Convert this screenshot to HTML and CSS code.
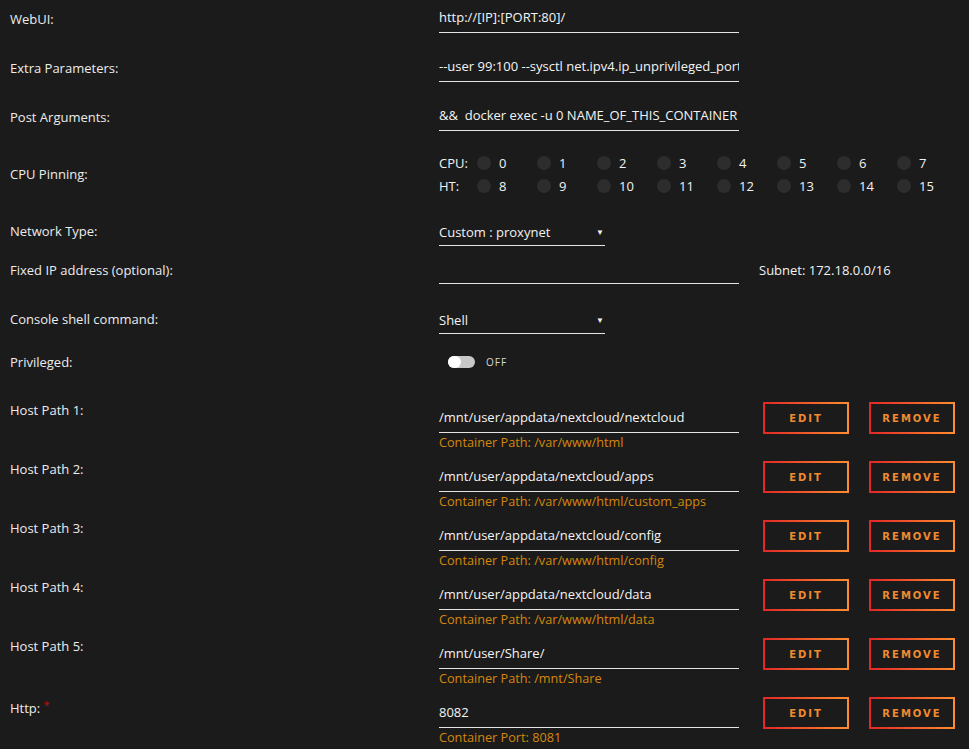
FILE: index.html
```html
<!DOCTYPE html>
<html lang="en">
<head>
  <meta charset="UTF-8" />
  <title>Update Container</title>
  <link rel="stylesheet" href="styles.css">
</head>
<body>
  <div class="form">
    <div class="row">
      <label class="lbl">WebUI:</label>
      <div class="val"><input class="textbox" type="text" value="http://[IP]:[PORT:80]/" /></div>
    </div>

    <div class="row">
      <label class="lbl">Extra Parameters:</label>
      <div class="val"><input class="textbox" type="text" value="--user 99:100 --sysctl net.ipv4.ip_unprivileged_port_start=0" /></div>
    </div>

    <div class="row">
      <label class="lbl">Post Arguments:</label>
      <div class="val"><input class="textbox" type="text" value="&amp;&amp;  docker exec -u 0 NAME_OF_THIS_CONTAINER /bin/sh -c 'echo'" /></div>
    </div>

    <div class="row row-cpu">
      <label class="lbl lbl-cpu">CPU Pinning:</label>
      <div class="val cpu-grid">
        <div class="cpu-line">
          <span class="cpu-name">CPU:</span>
          <span class="core"><i class="dot"></i>0</span>
          <span class="core"><i class="dot"></i>1</span>
          <span class="core"><i class="dot"></i>2</span>
          <span class="core"><i class="dot"></i>3</span>
          <span class="core"><i class="dot"></i>4</span>
          <span class="core"><i class="dot"></i>5</span>
          <span class="core"><i class="dot"></i>6</span>
          <span class="core"><i class="dot"></i>7</span>
        </div>
        <div class="cpu-line">
          <span class="cpu-name">HT:</span>
          <span class="core"><i class="dot"></i>8</span>
          <span class="core"><i class="dot"></i>9</span>
          <span class="core"><i class="dot"></i>10</span>
          <span class="core"><i class="dot"></i>11</span>
          <span class="core"><i class="dot"></i>12</span>
          <span class="core"><i class="dot"></i>13</span>
          <span class="core"><i class="dot"></i>14</span>
          <span class="core"><i class="dot"></i>15</span>
        </div>
      </div>
    </div>

    <div class="row row-net">
      <label class="lbl">Network Type:</label>
      <div class="val"><div class="select">Custom : proxynet<span class="arrow">&#9660;</span></div></div>
    </div>

    <div class="row">
      <label class="lbl">Fixed IP address (optional):</label>
      <div class="val val-inline">
        <input class="textbox" type="text" value="" />
        <span class="subnet">Subnet: 172.18.0.0/16</span>
      </div>
    </div>

    <div class="row row-console">
      <label class="lbl">Console shell command:</label>
      <div class="val"><div class="select">Shell<span class="arrow">&#9660;</span></div></div>
    </div>

    <div class="row row-priv">
      <label class="lbl">Privileged:</label>
      <div class="switch">
        <span class="track"><span class="knob"></span></span>
        <span class="switch-text">OFF</span>
      </div>
    </div>

    <div class="row row-path">
      <label class="lbl">Host Path 1:</label>
      <div class="val path">
        <div class="path-box">
          <input class="textbox" type="text" value="/mnt/user/appdata/nextcloud/nextcloud" />
          <div class="hint">Container Path: /var/www/html</div>
        </div>
        <button class="btn btn-edit">EDIT</button>
        <button class="btn btn-remove">REMOVE</button>
      </div>
    </div>

    <div class="row row-path">
      <label class="lbl">Host Path 2:</label>
      <div class="val path">
        <div class="path-box">
          <input class="textbox" type="text" value="/mnt/user/appdata/nextcloud/apps" />
          <div class="hint">Container Path: /var/www/html/custom_apps</div>
        </div>
        <button class="btn btn-edit">EDIT</button>
        <button class="btn btn-remove">REMOVE</button>
      </div>
    </div>

    <div class="row row-path">
      <label class="lbl">Host Path 3:</label>
      <div class="val path">
        <div class="path-box">
          <input class="textbox" type="text" value="/mnt/user/appdata/nextcloud/config" />
          <div class="hint">Container Path: /var/www/html/config</div>
        </div>
        <button class="btn btn-edit">EDIT</button>
        <button class="btn btn-remove">REMOVE</button>
      </div>
    </div>

    <div class="row row-path">
      <label class="lbl">Host Path 4:</label>
      <div class="val path">
        <div class="path-box">
          <input class="textbox" type="text" value="/mnt/user/appdata/nextcloud/data" />
          <div class="hint">Container Path: /var/www/html/data</div>
        </div>
        <button class="btn btn-edit">EDIT</button>
        <button class="btn btn-remove">REMOVE</button>
      </div>
    </div>

    <div class="row row-path">
      <label class="lbl">Host Path 5:</label>
      <div class="val path">
        <div class="path-box">
          <input class="textbox" type="text" value="/mnt/user/Share/" />
          <div class="hint">Container Path: /mnt/Share</div>
        </div>
        <button class="btn btn-edit">EDIT</button>
        <button class="btn btn-remove">REMOVE</button>
      </div>
    </div>

    <div class="row row-path">
      <label class="lbl">Http: <span class="required">*</span></label>
      <div class="val path">
        <div class="path-box">
          <input class="textbox" type="text" value="8082" />
          <div class="hint">Container Port: 8081</div>
        </div>
        <button class="btn btn-edit">EDIT</button>
        <button class="btn btn-remove">REMOVE</button>
      </div>
    </div>
  </div>
</body>
</html>
```

FILE: styles.css
```css
html, body {
  margin: 0;
  padding: 0;
  background-color: #1b1b1b;
  overflow: hidden;
}
body {
  font-family: "Open Sans", "Noto Sans", sans-serif;
  font-size: 13px;
  color: #f2f2f2;
}
.form {
  padding-left: 10px;
}
.row {
  display: flex;
  align-items: flex-start;
  height: 49px;
}
.row-cpu { height: 65px; }
.row-net { height: 39px; }
.row-console { height: 43px; }
.row-priv { height: 48px; }
.row-path { height: 59px; }

.lbl {
  width: 429px;
  flex: none;
  margin-top: 11px;
  line-height: 16px;
  color: #ececec;
}
.lbl-cpu {
  margin-top: 19px;
}
.required {
  color: #c01010;
  font-size: 11px;
  vertical-align: 4px;
}
.val {
  display: flex;
  align-items: flex-start;
}

.textbox {
  width: 300px;
  box-sizing: border-box;
  margin: 5px 0 0 0;
  padding: 4px 0 7px 0;
  border: none;
  border-bottom: 1px solid #e5e5e5;
  background: transparent;
  color: #f4f4f4;
  font-family: inherit;
  font-size: 13px;
  line-height: 16px;
  height: 28px;
  outline: none;
}

.select {
  width: 166px;
  box-sizing: border-box;
  margin-top: 6px;
  padding: 6px 0 5px 0;
  height: 28px;
  line-height: 16px;
  border-bottom: 1px solid #e5e5e5;
  display: flex;
  justify-content: space-between;
}
.arrow {
  font-size: 8px;
  padding-right: 1px;
}

.val-inline .subnet {
  margin: 11px 0 0 20px;
  line-height: 16px;
}

/* cpu pinning */
.cpu-grid {
  flex-direction: column;
  margin-top: 4px;
}
.cpu-line {
  display: flex;
  align-items: center;
  height: 23px;
}
.cpu-name {
  width: 38px;
}
.core {
  width: 60px;
  display: flex;
  align-items: center;
  gap: 8px;
}
.dot {
  width: 14px;
  height: 14px;
  border-radius: 50%;
  background: #2d2d2d;
}

/* privileged switch */
.switch {
  display: flex;
  align-items: center;
  height: 12px;
  margin: 13px 0 0 9px;
  gap: 11px;
}
.track {
  width: 27px;
  height: 12px;
  border-radius: 6px;
  background: #c8c8c8;
  display: flex;
  align-items: center;
}
.knob {
  width: 13px;
  height: 12px;
  border-radius: 6px;
  background: #ffffff;
}
.switch-text {
  font-size: 10px;
  line-height: 12px;
  letter-spacing: 1px;
  color: #d8d8d8;
}

/* host paths */
.path-box {
  width: 300px;
}
.path .textbox {
  margin-top: 14px;
}
.hint {
  font-size: 12.7px;
  line-height: 18px;
  color: #d4870c;
}
.btn {
  width: 86px;
  height: 32px;
  margin-top: 11px;
  background: transparent;
  border: 2px solid;
  border-image: linear-gradient(90deg, #e22828, #ff8c2f) 1;
  color: #f08a30;
  font-family: "DejaVu Sans", sans-serif;
  font-weight: bold;
  font-size: 10px;
  letter-spacing: 2px;
  cursor: pointer;
}
.btn-edit {
  margin-left: 24px;
}
.btn-remove {
  margin-left: 20px;
}
```
